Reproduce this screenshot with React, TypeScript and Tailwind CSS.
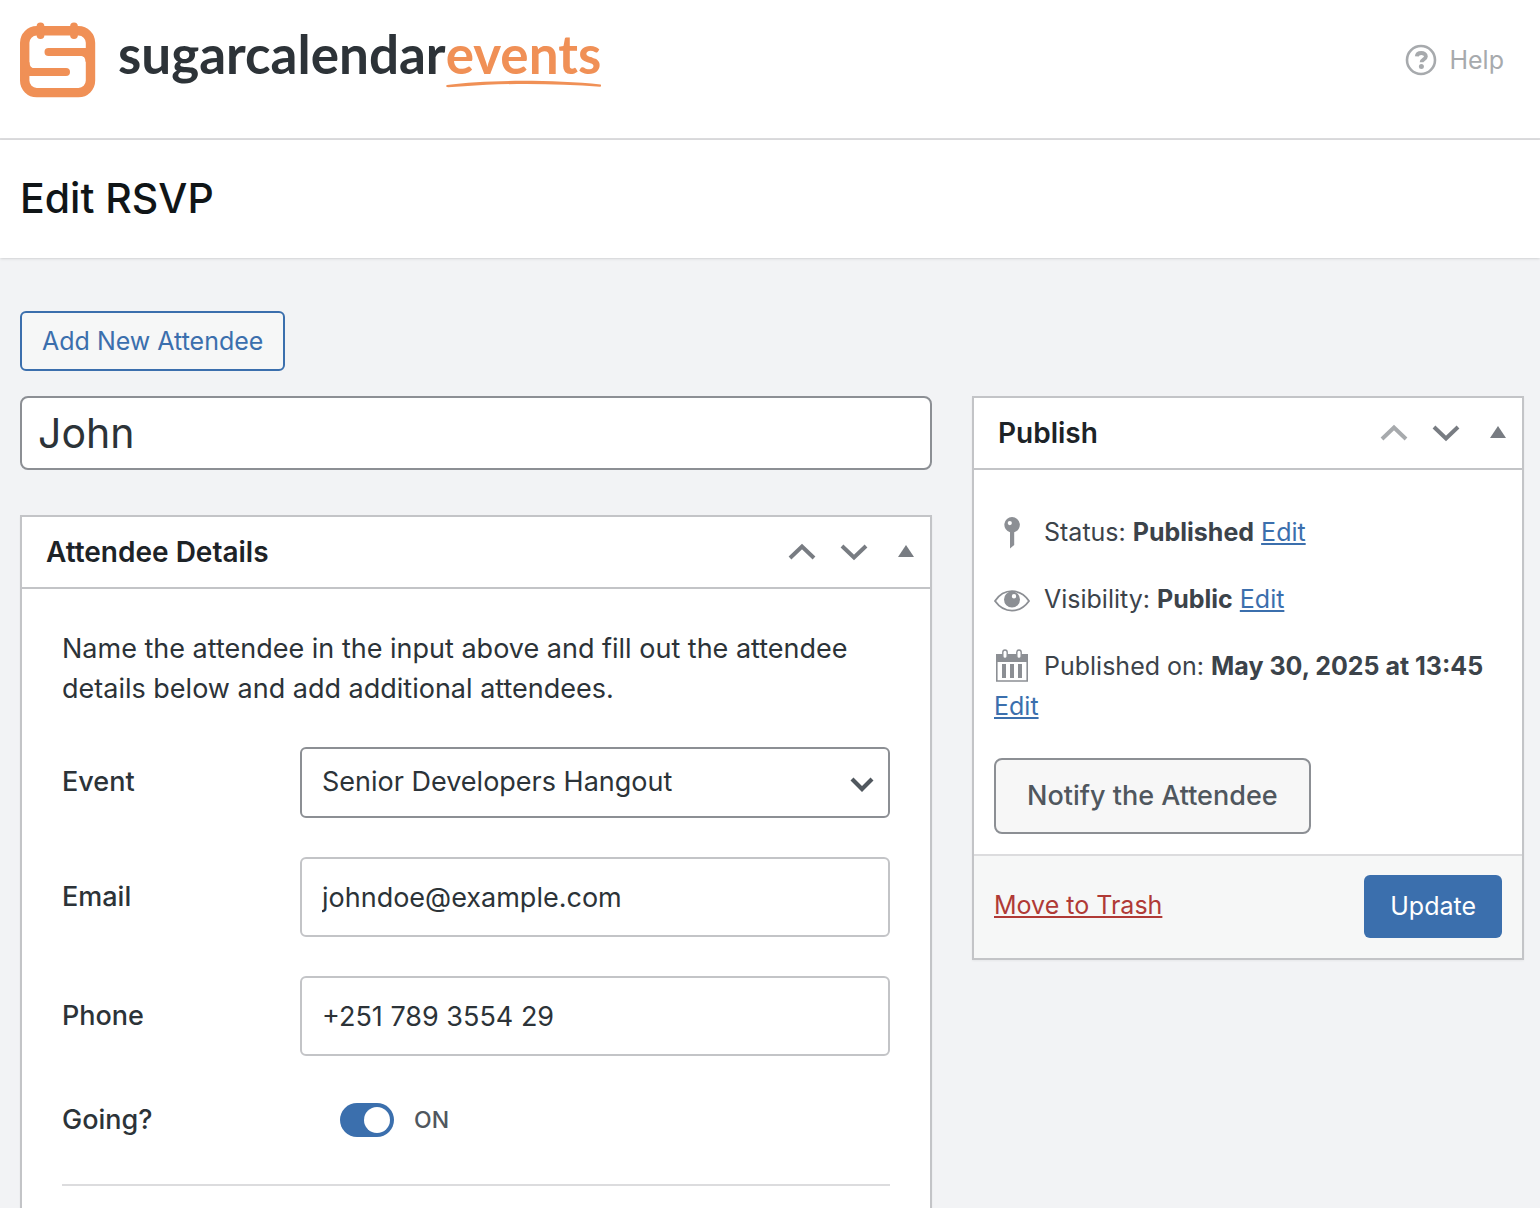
import { useState } from 'react';
import type { ReactNode } from 'react';
import clsx from 'clsx';

const LogoMark = () => (
  <svg width="76" height="76" viewBox="0 0 76 76" fill="none" aria-hidden="true">
    <rect x="4.7" y="8.8" width="65.8" height="61.8" rx="12" stroke="#f09056" strokeWidth="9.4" />
    <path d="M20.5 4.500v8.600M54 4.500v8.600" stroke="#f09056" strokeWidth="7.800" strokeLinecap="round" />
    <path d="M28.500 30H69M6 50H46" stroke="#f09056" strokeWidth="8" strokeLinecap="round" />
    <path d="M66 33.800h-6q5.500 0 5.500 6h.5zM9 46.200h6q-5.500 0-5.500-6H9z" fill="#f09056" />
  </svg>
);

const Swoosh = () => (
  <svg
    className="absolute -bottom-0.5 left-0 w-full"
    height="8"
    viewBox="0 0 154 8"
    preserveAspectRatio="none"
    aria-hidden="true"
  >
    <path d="M1 5C40-.5 105-.5 153 4.500c1 .5 1 2-.5 2.200C110 3.500 60 2.800 18 6.300L2 7.200C0 7.200-.5 5.500 1 5z" fill="#f09056" />
  </svg>
);

const HelpIcon = () => (
  <svg width="32" height="32" viewBox="0 0 32 32" fill="none" stroke="currentColor" aria-hidden="true">
    <circle cx="16" cy="16" r="14" strokeWidth="2.6" />
    <path d="M11.800 12.400c.2-2.600 2.200-3.400 4.500-3.400s4.600 1.200 4.600 3.500c0 3-4.300 2.800-4.300 5.800" strokeWidth="3.800" />
    <circle cx="16.400" cy="22.600" r="2.500" fill="currentColor" stroke="none" />
  </svg>
);

const PinIcon = () => (
  <svg width="36" height="36" viewBox="0 0 36 36" fill="#8c8f94" aria-hidden="true">
    <path
      fillRule="evenodd"
      d="M18 1a7.800 7.800 0 0 1 2.200 15.300V29L16 32.500V16.300A7.800 7.800 0 0 1 18 1zm-2.200 4a2.100 2.100 0 1 0 0 4.200 2.100 2.100 0 0 0 0-4.200z"
    />
  </svg>
);

const EyeIcon = () => (
  <svg width="36" height="36" viewBox="0 0 36 36" fill="none" aria-hidden="true">
    <path d="M1 18C6 10.500 12 8.200 18 8.200S30 10.500 35 18c-5 7-11 9.600-17 9.600S6 25 1 18z" stroke="#8c8f94" strokeWidth="1.800" />
    <path
      fillRule="evenodd"
      d="M18 8.500a8 8 0 1 0 0 16 8 8 0 0 0 0-16zM20 11a2.200 2.200 0 1 1 0 4.400 2.200 2.200 0 0 1 0-4.400z"
      fill="#8c8f94"
    />
  </svg>
);

const CalendarIcon = () => (
  <svg className="overflow-visible" width="36" height="36" viewBox="0 3 36 36" fill="none" aria-hidden="true">
    <path d="M2.800 7v26h30.400V7z" stroke="#8c8f94" strokeWidth="1.600" />
    <path d="M2 6h32v8H2z" fill="#8c8f94" />
    <rect x="8.800" y="2" width="4.400" height="8.500" rx="2.200" fill="#fff" stroke="#8c8f94" strokeWidth="1.400" />
    <rect x="22.800" y="2" width="4.400" height="8.500" rx="2.200" fill="#fff" stroke="#8c8f94" strokeWidth="1.400" />
    <path d="M10 16v14M18 16v14M26 16v14" stroke="#8c8f94" strokeWidth="4" />
  </svg>
);

const Chevron = ({ className }: { className?: string }) => (
  <svg className={className} width="28" height="18" viewBox="0 0 28 18" fill="none" stroke="currentColor" aria-hidden="true">
    <path d="M2 3l12 11.500L26 3" strokeWidth="4" />
  </svg>
);

interface PanelProps {
  title: string;
  first?: boolean;
  children: ReactNode;
}

function Panel({ title, first, children }: PanelProps) {
  return (
    <section className="border-2 border-[#c3c4c7] bg-white shadow-xs">
      <header className="flex h-[72px] items-center justify-between border-b-2 border-[#c3c4c7] pr-4 pl-6">
        <h2 className="text-[28px] font-semibold text-[#1d2327]">{title}</h2>
        <div className="flex items-center text-[#787c82]">
          <button type="button" aria-label="Move up" disabled={first} className="mr-6 disabled:text-[#a7aaad]">
            <Chevron className="rotate-180" />
          </button>
          <button type="button" aria-label="Move down" className="mr-[30px]">
            <Chevron />
          </button>
          <button type="button" aria-label="Toggle panel">
            <svg width="16" height="14" viewBox="0 0 16 14" fill="currentColor" aria-hidden="true">
              <path d="M8 0l8 12H0z" />
            </svg>
          </button>
        </div>
      </header>
      {children}
    </section>
  );
}

interface PublishRowProps {
  icon: ReactNode;
  label: string;
  value: string;
}

function PublishRow({ icon, label, value }: PublishRowProps) {
  return (
    <div className="px-5 pt-3 pb-4 text-[25px] leading-[39px] text-[#3c434a]">
      <span className="mr-[14px] inline-block align-middle">{icon}</span>
      {label}: <strong className="font-bold">{value}</strong>{' '}
      <a href="#" className="text-[#3b6fad] underline">Edit</a>
    </div>
  );
}

const fieldClass = 'w-full rounded-md border-2 bg-white px-5 text-[27px] text-[#2c3338]';
const labelClass = 'w-[238px] shrink-0 text-[27px] font-medium text-[#2c3338]';

export default function App() {
  const [name, setName] = useState('John');
  const [email, setEmail] = useState('johndoe@example.com');
  const [phone, setPhone] = useState('+251 789 3554 29');
  const [going, setGoing] = useState(true);

  return (
    <div className="min-h-screen bg-[#f2f3f5] font-['Inter',sans-serif]">
      <header className="flex h-[140px] items-start justify-between border-b-2 border-[#dcdcde] bg-white pt-[22px] pr-9 pl-5">
        <div className="flex items-start gap-[22px]">
          <LogoMark />
          <div className="flex font-['Lato',sans-serif] text-[53px] leading-[64px] font-bold text-[#2d3338]">
            sugarcalendar
            <span className="relative text-[#f09056]">
              events
              <Swoosh />
            </span>
          </div>
        </div>
        <a href="#" className="mt-5 flex items-center gap-3 text-[25px] leading-9 text-[#a7aaad]">
          <HelpIcon />
          Help
        </a>
      </header>

      <div className="flex h-[118px] items-center bg-white px-5 shadow-sm">
        <h1 className="text-[41px] font-medium text-[#101517]">Edit RSVP</h1>
      </div>

      <main className="pt-[53px] pr-4 pl-5">
        <button
          type="button"
          className="h-[60px] rounded-md border-2 border-[#3b6fad] bg-[#f6f7f7] px-5 pt-0.5 text-[25px] text-[#3b6fad]"
        >
          Add New Attendee
        </button>

        <div className="mt-[25px] flex items-start gap-10">
          <div className="min-w-0 flex-1">
            <input
              type="text"
              aria-label="Attendee name"
              value={name}
              onChange={(e) => setName(e.target.value)}
              className="h-[74px] w-full rounded-lg border-2 border-[#8c8f94] bg-white px-4 text-[41px] text-[#2c3338]"
            />

            <div className="mt-[45px]">
              <Panel title="Attendee Details">
                <div className="p-10">
                  <p className="text-[27px] leading-10 text-[#2c3338]">
                    Name the attendee in the input above and fill out the attendee details below and add additional
                    attendees.
                  </p>

                  <div className="mt-[38px] flex items-center">
                    <label htmlFor="event" className={labelClass}>Event</label>
                    <div className="relative flex-1">
                      <select id="event" className={clsx(fieldClass, 'block h-[71px] appearance-none border-[#8c8f94]')}>
                        <option>Senior Developers Hangout</option>
                      </select>
                      <svg
                        className="pointer-events-none absolute top-[30px] right-4"
                        width="24"
                        height="16"
                        viewBox="0 0 24 16"
                        fill="none"
                        aria-hidden="true"
                      >
                        <path d="M2 2l10 10L22 2" stroke="#50575e" strokeWidth="4.200" />
                      </svg>
                    </div>
                  </div>

                  <div className="mt-[39px] flex items-center">
                    <label htmlFor="email" className={labelClass}>Email</label>
                    <input
                      id="email"
                      type="email"
                      value={email}
                      onChange={(e) => setEmail(e.target.value)}
                      className={clsx(fieldClass, 'h-20 border-[#c3c4c7]')}
                    />
                  </div>

                  <div className="mt-[39px] flex items-center">
                    <label htmlFor="phone" className={labelClass}>Phone</label>
                    <input
                      id="phone"
                      type="tel"
                      value={phone}
                      onChange={(e) => setPhone(e.target.value)}
                      className={clsx(fieldClass, 'h-20 border-[#c3c4c7]')}
                    />
                  </div>

                  <div className="mt-11 flex h-10 items-center">
                    <label htmlFor="going" className={labelClass}>Going?</label>
                    <input
                      id="going"
                      type="checkbox"
                      role="switch"
                      checked={going}
                      onChange={(e) => setGoing(e.target.checked)}
                      className="ml-10 flex h-[34px] w-[54px] appearance-none items-center rounded-full bg-[#8c8f94] px-1 before:size-[26px] before:rounded-full before:bg-white before:content-[''] checked:justify-end checked:bg-[#3b6fad]"
                    />
                    <span className="ml-5 text-[23px] font-medium text-[#50575e]">{going ? 'ON' : 'OFF'}</span>
                  </div>

                  <hr className="mt-11 border-t-2 border-[#dcdcde]" />
                </div>
              </Panel>
            </div>
          </div>

          <aside className="w-[552px] shrink-0">
            <Panel title="Publish" first>
              <div className="pt-[31px] pb-5">
                <PublishRow icon={<PinIcon />} label="Status" value="Published" />
                <PublishRow icon={<EyeIcon />} label="Visibility" value="Public" />
                <PublishRow icon={<CalendarIcon />} label="Published on" value="May 30, 2025 at 13:45" />
                <button
                  type="button"
                  className="mt-4 ml-5 h-[76px] rounded-lg border-2 border-[#8c8f94] bg-[#f7f7f7] px-[31px] pt-0.5 text-[27px] font-medium text-[#50575e]"
                >
                  Notify the Attendee
                </button>
              </div>
              <footer className="flex items-center justify-between border-t-2 border-[#dcdcde] bg-[#f6f7f7] px-5 pt-[19px] pb-5">
                <a href="#" className="text-[25px] text-[#b03a36] underline">Move to Trash</a>
                <button type="button" className="h-[63px] rounded-md bg-[#3b6fad] px-[26px] pt-0.5 text-[25px] text-white">
                  Update
                </button>
              </footer>
            </Panel>
          </aside>
        </div>
      </main>
    </div>
  );
}
